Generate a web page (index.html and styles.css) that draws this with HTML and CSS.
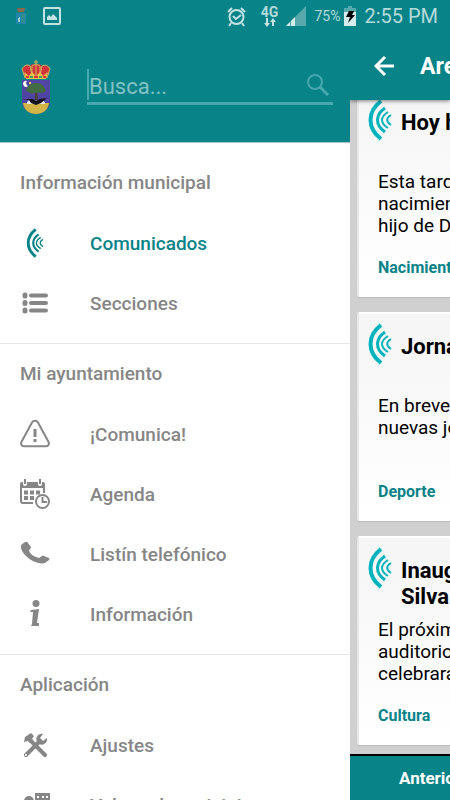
FILE: index.html
```html
<!DOCTYPE html>
<html lang="es">
<head>
    <meta charset="UTF-8">
    <meta name="viewport" content="width=device-width, initial-scale=1">
    <title>Comunicados</title>
    <link rel="stylesheet" href="styles.css">
</head>
<body>
    <svg class="sprite" aria-hidden="true">
        <symbol id="ondas" viewBox="0 0 24 42">
            <g fill="none" stroke="currentColor">
                <path d="M13 2C-1 13-1 29 13 40" stroke-width="4"/>
                <path d="M17 9C7 16 7 26 17 33" stroke-width="3"/>
                <path d="M20 13C12 18 12 24 20 29" stroke-width="2"/>
                <path d="M23 16C18 19 18 23 23 26" stroke-width="2"/>
            </g>
        </symbol>
    </svg>

    <!-- barra de estado -->
    <div class="estado">
        <svg class="estado-escudo" width="12" height="18" viewBox="0 0 12 18">
            <path d="M2 1h8l-1 4H3z" fill="#a8643f"/>
            <path d="M1 6h10v11H1z" fill="#2787b4"/>
            <path d="M6 7h4v9H6z" fill="#3f8f96"/>
            <path d="M3 11h1v4H3zM4 10h1v5H4z" fill="#b9dbe8"/>
        </svg>
        <svg width="18" height="18" viewBox="0 0 18 18">
            <rect x="1" y="1" width="16" height="16" rx="1" fill="none" stroke="#c3e2e3" stroke-width="2"/>
            <path d="M4 13v-3l2-2 2 2 2-3 2 2 2 2v2z" fill="#c3e2e3"/>
        </svg>
        <div class="estado-der">
            <svg width="19" height="21" viewBox="0 0 19 21" fill="none" stroke="#c3e2e3" stroke-width="2">
                <circle cx="9.500" cy="11" r="7"/>
                <path d="M1 6l4-4M18 6l-4-4M4 17l-2 3M15 17l2 3M6 10l3 3 5-4"/>
            </svg>
            <span class="red">4G
                <svg width="12" height="9" viewBox="0 0 12 9" fill="#c3e2e3">
                    <path d="M2 0h2v5h2L3 9 0 5h2zM8 8h2V4h2L9 0 6 4h2z"/>
                </svg>
            </span>
            <svg width="20" height="20" viewBox="0 0 20 20">
                <path d="M0 20L20 0v20z" fill="#58a9ac"/>
                <path d="M0 20l4-4v4zM5 15l4-4v9H5z" fill="#d5ecec"/>
            </svg>
            <span class="carga">75%</span>
            <svg class="pila" width="12" height="20" viewBox="0 0 12 20">
                <path d="M4 0h4v2h4v4H0V2h4z" fill="#58a9ac"/>
                <path d="M0 6h12v14H0z" fill="#d5ecec"/>
                <path d="M5 5h5L8 9h3l-7 8 2-6H2z" fill="#000"/>
            </svg>
            <span class="hora">2:55 PM</span>
        </div>
    </div>

    <div class="app">
        <!-- menu lateral -->
        <aside class="menu">
            <header class="menu-cabecera">
                <svg width="30" height="54" viewBox="0 0 30 54">
                    <path d="M1 20h28v21c0 8-7 13-14 13S1 49 1 41z" fill="#5145a3"/>
                    <path d="M2 43h26c-1 7-6 11-13 11S3 50 2 43z" fill="#d1b647"/>
                    <path d="M6 44c0-4 3-5 9-3 6-2 9-1 9 3z" fill="#e8e8ee"/>
                    <path d="M2 39l10 0 3 2 4-2 7-1-6 5-5 2-5-2-2-3z" fill="#15131c"/>
                    <path d="M14 31h2l1 9h-3z" fill="#4b3f30"/>
                    <path d="M5 30c1-4 5-7 10-7s9 3 10 8c-3 3-7 1-10 2-4 1-8 0-10-3z" fill="#426b43"/>
                    <path d="M6 21a3 3 0 1 0 1 5 3 3 0 0 1-1-5z" fill="#fff"/>
                    <path d="M8 22h2v2H8z" fill="#e9d05c"/>
                    <path d="M4 18L1 9c2-4 6-5 8-3 2-3 10-3 12 0 3-2 7 0 8 3l-3 9z" fill="#d3333a"/>
                    <path d="M4 18L1 9c2-4 6-5 8-3l2 9V6l4-2 4 2v9l2-9c3-2 7 0 8 3l-3 9M15 0v15M13 2h4" fill="none" stroke="#c9b860" stroke-width="1"/>
                    <path d="M3 12l5 4 3-4 4 4 4-4 3 4 5-4-2 7H5z" fill="#e6c64d"/>
                    <path d="M5 16h3v2H5zM13 16h4v2h-4zM22 16h3v2h-3z" fill="#d3333a"/>
                    <path d="M9 16h3v2H9zM18 16h3v2h-3z" fill="#4c9a5c"/>
                </svg>
                <form class="buscador">
                    <input class="buscador-texto" type="text" placeholder="Busca..." aria-label="Busca">
                    <button class="buscador-boton" type="button" aria-label="Buscar">
                        <svg width="22" height="22" viewBox="0 0 22 22" fill="none" stroke="currentColor">
                            <circle cx="8" cy="8" r="7" stroke-width="2"/>
                            <path d="M13 13l8 8" stroke-width="3"/>
                        </svg>
                    </button>
                </form>
            </header>

            <nav>
                <section class="grupo grupo-primero">
                    <h2 class="grupo-titulo">Información municipal</h2>
                    <a class="opcion activa" href="#">
                        <svg class="icono" viewBox="0 0 30 30"><use href="#ondas" x="6" y="0" width="18" height="30"/></svg>
                        Comunicados
                    </a>
                    <a class="opcion" href="#">
                        <svg class="icono" viewBox="0 0 30 30" stroke="currentColor" stroke-width="4" stroke-linecap="round">
                            <path d="M11 7.500h15M11 15h15M11 22.500h15"/>
                            <path d="M5 7v1M5 14.500v1M5 22v1" stroke-width="5"/>
                        </svg>
                        Secciones
                    </a>
                </section>

                <section class="grupo">
                    <h2 class="grupo-titulo">Mi ayuntamiento</h2>
                    <a class="opcion" href="#">
                        <svg class="icono" viewBox="0 0 30 30" fill="none" stroke="currentColor" stroke-width="2">
                            <path d="M12 3.500c1.500-2.500 4.500-2.500 6 0l10.300 19c1.400 2.700 0 4.800-2.800 4.800h-21c-2.800 0-4.200-2.100-2.800-4.800z"/>
                            <path d="M15 10v8M15 20v3" stroke-width="3"/>
                        </svg>
                        ¡Comunica!
                    </a>
                    <a class="opcion" href="#">
                        <svg class="icono" viewBox="0 0 30 30" fill="none" stroke="currentColor">
                            <path d="M13 24H3q-2 0-2-2V5M24 5v9" stroke-width="2"/>
                            <path d="M0 9V5q0-2 2-2h1v2q0 2 2 2t2-2V3h11v2q0 2 2 2t2-2V3h1q2 0 2 2v4z" fill="currentColor" stroke="none"/>
                            <path d="M5 0v5M20 0v5" stroke-width="2"/>
                            <path d="M4 13.500h4M10 13.500h4M16 13.500h4M4 19h4M10 19h4" stroke-width="4"/>
                            <circle cx="22.500" cy="22.500" r="6.500" stroke-width="2" fill="#fff"/>
                            <path d="M22.500 18v5H27" stroke-width="2"/>
                        </svg>
                        Agenda
                    </a>
                    <a class="opcion" href="#">
                        <svg class="icono" viewBox="0 0 30 30">
                            <path d="M1 6l4-3q2-1 3 1l3 4q0 1-1 2l-1 2c2 4 6 6 10 7l3-2q1-1 2 0l5 2q1 1 0 2l-4 3c-3 1-9 0-14-3C5 17 1 12 1 8z" fill="currentColor"/>
                        </svg>
                        Listín telefónico
                    </a>
                    <a class="opcion" href="#">
                        <svg class="icono" viewBox="0 0 30 30" fill="currentColor">
                            <circle cx="16" cy="4.500" r="3.500"/>
                            <path d="M11 11l8-1-2 14 2 0v3h-8l1-2 1-12-3 0z"/>
                        </svg>
                        Información
                    </a>
                </section>

                <section class="grupo">
                    <h2 class="grupo-titulo">Aplicación</h2>
                    <a class="opcion" href="#">
                        <svg class="icono" viewBox="0 0 30 30">
                            <path d="M9 9l16 16" stroke="currentColor" stroke-width="4" stroke-linecap="round"/>
                            <path d="M4 12l1-5 6-4 3 3-2 3 1 1-3 3-2-2z" fill="currentColor"/>
                            <path d="M6 25L20 11" stroke="currentColor" stroke-width="4" stroke-linecap="round"/>
                            <path d="M17 12c-2-4 1-9 6-8l-3 4 3 3 4-3c1 5-4 8-8 6z" fill="currentColor"/>
                            <circle cx="6" cy="25" r="1" fill="#fff"/>
                        </svg>
                        Ajustes
                    </a>
                    <a class="opcion" href="#">
                        <svg class="icono" viewBox="0 0 30 30" fill="currentColor">
                            <circle cx="9" cy="11" r="5"/>
                            <path d="M15 3h15v12H15zM2 30c0-12 14-12 14 0z"/>
                            <path d="M17 7h2M22 7h2M26 7h2" stroke="#fff" stroke-width="2"/>
                        </svg>
                        Valora el municipio
                    </a>
                </section>
            </nav>
        </aside>

        <!-- pantalla desplazada por el menu -->
        <main class="pantalla">
            <header class="barra">
                <button class="volver" type="button" aria-label="Volver">
                    <svg width="20" height="20" viewBox="0 0 20 20" fill="none" stroke="currentColor" stroke-width="3">
                        <path d="M20 10H2M11 1l-9 9 9 9"/>
                    </svg>
                </button>
                <h1 class="barra-titulo">Arenas</h1>
            </header>

            <div class="lista">
                <article class="tarjeta">
                    <div class="tarjeta-cabecera">
                        <svg class="ondas"><use href="#ondas"/></svg>
                        <h3 class="tarjeta-titulo">Hoy ha nacido</h3>
                    </div>
                    <p class="tarjeta-texto">Esta tarde<br>nacimiento<br>hijo de Don</p>
                    <span class="etiqueta">Nacimientos</span>
                </article>
                <article class="tarjeta">
                    <div class="tarjeta-cabecera">
                        <svg class="ondas"><use href="#ondas"/></svg>
                        <h3 class="tarjeta-titulo">Jornadas</h3>
                    </div>
                    <p class="tarjeta-texto">En breve<br>nuevas jornadas</p>
                    <span class="etiqueta">Deporte</span>
                </article>
                <article class="tarjeta">
                    <div class="tarjeta-cabecera">
                        <svg class="ondas"><use href="#ondas"/></svg>
                        <h3 class="tarjeta-titulo">Inauguración<br>Silva</h3>
                    </div>
                    <p class="tarjeta-texto">El próximo<br>auditorio<br>celebrará</p>
                    <span class="etiqueta">Cultura</span>
                </article>
            </div>

            <footer class="pie">
                <button class="anterior" type="button">Anteriores</button>
            </footer>
        </main>
    </div>
</body>
</html>
```
FILE: styles.css
```css
* {
    box-sizing: border-box;
}
body {
    margin: 0;
    height: 100vh;
    display: flex;
    flex-direction: column;
    overflow: hidden;
    background: #088388;
    font-family: Roboto, sans-serif;
}
h1, h2, h3, p {
    margin: 0;
}
button {
    padding: 0;
    border: none;
    background: none;
    color: inherit;
    font-family: inherit;
    cursor: pointer;
}
svg {
    display: block;
    flex: none;
}
.sprite {
    position: absolute;
    width: 0;
    height: 0;
}

/* barra de estado */
.estado {
    flex: none;
    display: flex;
    align-items: center;
    height: 32px;
    padding: 0 12px 0 15px;
    gap: 16px;
    color: #b5dadb;
}
.estado-escudo {
    opacity: 0.8;
}
.estado-der {
    margin-left: auto;
    display: flex;
    align-items: center;
    gap: 8px;
}
.red {
    display: flex;
    flex-direction: column;
    align-items: center;
    margin-left: 7px;
    font-size: 14px;
    font-weight: bold;
    line-height: 12px;
}
.carga {
    font-size: 14px;
}
.pila {
    margin-left: -4px;
}
.hora {
    font-size: 20px;
}

.app {
    flex: 1;
    min-height: 0;
    display: flex;
}

/* menu lateral */
.menu {
    flex: none;
    width: 350px;
    overflow: hidden;
    background: #fff;
}
.menu-cabecera {
    display: flex;
    align-items: center;
    gap: 36px;
    height: 111px;
    padding: 0 17px 0 21px;
    background: #088388;
    border-bottom: 1px solid #a9c4c5;
}
.buscador {
    flex: 1;
    min-width: 0;
    display: flex;
    align-items: center;
    padding: 0 4px 2px 0;
    border-bottom: 3px solid #47a8ae;
    color: #47a8ae;
}
.buscador-texto {
    flex: 1;
    min-width: 0;
    height: 31px;
    padding: 4px 0 0;
    border: none;
    border-left: 2px solid #47a8ae;
    background: none;
    color: #fff;
    font-family: inherit;
    font-size: 22px;
}
.buscador-texto::placeholder {
    color: #84c1c4;
}
.grupo {
    padding-bottom: 10px;
    border-top: 1px solid #e6e6e6;
}
.grupo-primero {
    padding-top: 10px;
    border-top: none;
}
.grupo-titulo {
    padding-left: 20px;
    color: #868686;
    font-size: 19px;
    font-weight: 400;
    line-height: 60px;
    -webkit-text-stroke: 0;
}
.grupo-titulo,
.opcion {
    font-weight: 500;
}
.opcion {
    display: flex;
    align-items: center;
    gap: 40px;
    height: 60px;
    padding-left: 20px;
    color: #868686;
    font-size: 19px;
    text-decoration: none;
}
.activa {
    color: #088388;
}
.icono {
    width: 30px;
    height: 30px;
}

/* pantalla */
.pantalla {
    flex: 1;
    min-width: 0;
    display: flex;
    flex-direction: column;
    overflow: hidden;
    background: #d0d0d0;
    white-space: nowrap;
}
.barra {
    flex: none;
    display: flex;
    align-items: center;
    gap: 26px;
    height: 68px;
    padding-left: 24px;
    background: #088388;
    color: #fff;
    box-shadow: 0 1px 4px rgba(0, 0, 0, 0.5);
    z-index: 1;
}
.barra-titulo {
    font-size: 23px;
    font-weight: bold;
}
.lista {
    flex: 1;
    min-height: 0;
    display: flex;
    flex-direction: column;
    justify-content: flex-end;
    gap: 15px;
    padding: 0 0 9px 7px;
}
.tarjeta {
    flex: none;
    display: flex;
    flex-direction: column;
    height: 209px;
    padding: 9px 9px 17px 9px;
    border: 2px solid #fff;
    border-left-color: #e8e8e8;
    border-right: none;
    border-radius: 3px 0 0 3px;
    background: linear-gradient(#f5f5f5, #fff);
    box-shadow: 0 1px 1px #bbb;
}
.tarjeta-cabecera {
    display: flex;
    gap: 9px;
    height: 72px;
}
.ondas {
    width: 24px;
    height: 42px;
    color: #00b3bd;
}
.tarjeta-titulo {
    padding-top: 11px;
    font-size: 22px;
    font-weight: bold;
    line-height: 26px;
}
.tarjeta-texto {
    padding-left: 10px;
    font-size: 19px;
    line-height: 22px;
}
.etiqueta {
    margin-top: auto;
    padding-left: 10px;
    color: #088388;
    font-size: 16px;
    font-weight: bold;
    line-height: 20px;
}
.pie {
    flex: none;
    display: flex;
    height: 46px;
    padding-left: 49px;
    border-top: 2px solid #000;
    background: #088388;
    color: #fff;
}
.anterior {
    font-size: 17px;
    font-weight: bold;
}
```
